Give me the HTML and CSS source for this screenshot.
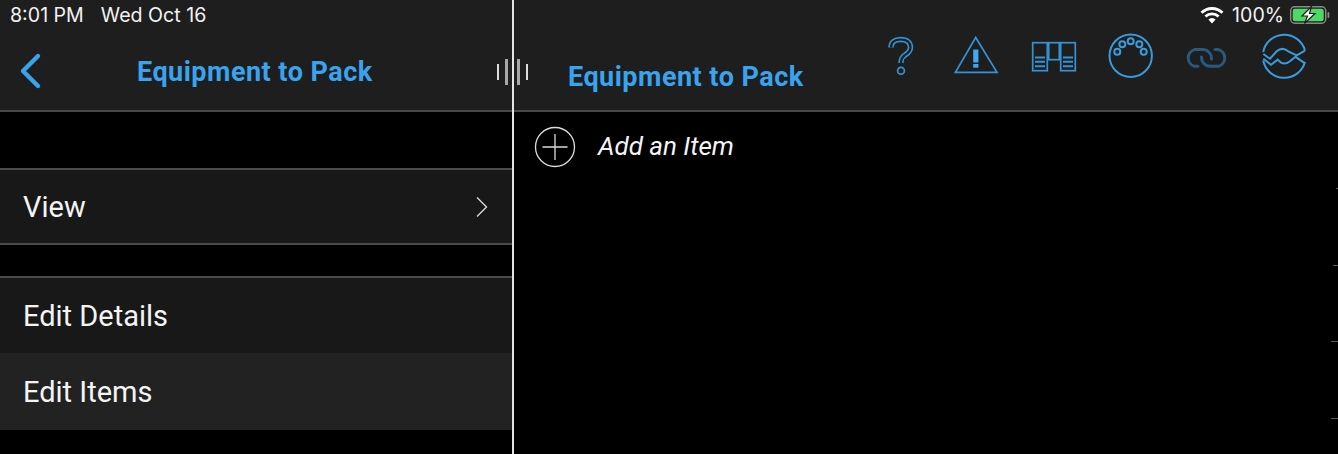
FILE: index.html
```html
<!DOCTYPE html>
<html lang="en">
<head>
  <meta charset="UTF-8">
  <title>Equipment to Pack</title>
  <link rel="stylesheet" href="styles.css">
</head>
<body>
  <div class="split">
    <section class="pane-left">
      <header class="bar">
        <div class="status">
          <span class="clock">8:01 PM</span>
          <span class="date">Wed Oct 16</span>
        </div>
        <div class="nav-left">
          <svg class="back" width="24" height="38" viewBox="0 0 24 38"><path d="M20 4 L5 19 L20 34"/></svg>
          <h1 class="title title-left">Equipment to Pack</h1>
        </div>
      </header>
      <div class="spacer-top"></div>
      <div class="row row-first">
        <span>View</span>
        <svg class="chevron" width="14" height="22" viewBox="0 0 14 22"><path d="M2 1.5 L11.5 11 L2 20.5"/></svg>
      </div>
      <div class="spacer-mid"></div>
      <div class="row row-first row-plain"><span>Edit Details</span></div>
      <div class="row row-active"><span>Edit Items</span></div>
    </section>

    <section class="pane-right">
      <header class="bar">
        <div class="status status-right">
          <svg class="wifi" width="24" height="18" viewBox="0 0 24 18">
            <path d="M1.5 6.8 A15 15 0 0 1 22.5 6.8" fill="none" stroke="#fff" stroke-width="2.8"/>
            <path d="M5.4 10.6 A9.6 9.6 0 0 1 18.6 10.6" fill="none" stroke="#fff" stroke-width="2.8"/>
            <path d="M12 17.5 L8.4 13.6 A5 5 0 0 1 15.6 13.6 Z" fill="#fff"/>
          </svg>
          <span class="pct">100%</span>
          <svg class="battery" width="41" height="18" viewBox="0 0 41 18">
            <rect x="0.7" y="0.7" width="35" height="16.6" rx="4" fill="none" stroke="#8a8a8a" stroke-width="1.4"/>
            <rect x="2.7" y="2.7" width="31" height="12.6" rx="2.2" fill="#4cd964"/>
            <path d="M21.5 0.5 L12 10 H17.5 L14.5 17.5 L25 7.5 H19.5 Z" fill="#fff" stroke="#1e1e1e" stroke-width="1.2"/>
            <rect x="37.5" y="6" width="1.8" height="6" rx="0.9" fill="#8a8a8a"/>
          </svg>
        </div>
        <div class="nav-right">
          <h1 class="title title-right">Equipment to Pack</h1>
          <div class="tools">
            <svg class="tool" viewBox="0 0 48 48">
              <path class="q-out" d="M14 15.5 C14 10 18 7.5 23.5 7.5 C30 7.5 33.5 10.5 33.5 15.5 C33.5 20 30 21.5 27.5 23.5 C25 25.2 24 26.5 24 31"/>
              <path class="q-in" d="M14 15.5 C14 10 18 7.5 23.5 7.5 C30 7.5 33.5 10.5 33.5 15.5 C33.5 20 30 21.5 27.5 23.5 C25 25.2 24 26.5 24 31"/>
              <circle cx="24" cy="38.7" r="3.4"/>
            </svg>
            <svg class="tool" viewBox="0 0 48 48">
              <path d="M21.7 5.5 L1.4 40.3 H43 Z"/>
              <rect class="fill" x="19.2" y="17.5" width="5.2" height="13"/>
              <rect class="fill" x="19.2" y="32" width="5.2" height="3.7"/>
            </svg>
            <svg class="tool" viewBox="0 0 48 48">
              <rect x="1.7" y="10.7" width="14.6" height="28"/>
              <rect x="17.7" y="10.7" width="10.6" height="17"/>
              <rect x="29.7" y="10.7" width="14.6" height="28"/>
              <path class="thick" d="M4 25.5 H14 M4 29.8 H14 M4 34.2 H14 M32 25.5 H42 M32 29.8 H42 M32 34.2 H42"/>
            </svg>
            <svg class="tool tool-round" viewBox="0 0 48 48">
              <circle cx="22.7" cy="23.7" r="21.2"/>
              <circle cx="9.3" cy="19.7" r="3"/>
              <circle cx="14.3" cy="12.3" r="3"/>
              <circle cx="22.7" cy="9.3" r="3"/>
              <circle cx="31.3" cy="12.3" r="3"/>
              <circle cx="35.7" cy="19.7" r="3"/>
            </svg>
            <svg class="tool tool-dim" viewBox="0 0 48 48">
              <path d="M13 34.3 H9.5 A8.7 8.7 0 0 1 9.5 17.6 H18.5 A8.7 8.7 0 0 1 26.5 27"/>
              <path d="M30 17.6 H33.5 A8.7 8.7 0 0 1 33.5 34.3 H24.5 A8.7 8.7 0 0 1 16.5 25"/>
            </svg>
            <svg class="tool tool-round" viewBox="0 0 48 48">
              <path d="M1.2 20 A21.5 21.5 0 0 1 43 18.5"/>
              <path d="M1.2 28.5 A21.5 21.5 0 0 0 43 30"/>
              <path d="M1.3 22 L8 26.7 L14.7 19.3 Q20.3 14.5 26.3 19.3 L34.7 23.3 L43 18.7"/>
              <path d="M1.3 26.7 L9 32.7 L15.7 27.7 Q21.3 34.5 28 29.3 L33.5 24.8 L43 31.3"/>
            </svg>
          </div>
        </div>
      </header>
      <div class="add-row">
        <svg class="add-icon" width="42" height="42" viewBox="0 0 42 42">
          <circle cx="21" cy="21" r="19.5"/>
          <path d="M8.5 21 H33.5 M21 8 V34"/>
        </svg>
        <span class="add-label">Add an Item</span>
      </div>
    </section>

    <div class="grip">
      <i></i><i class="tall"></i><i class="tall after-divider"></i><i></i>
    </div>
    <div class="ticks">
      <i class="t1"></i><i class="t2"></i><i class="t3"></i><i class="t3"></i>
    </div>
  </div>
</body>
</html>
```

FILE: styles.css
```css
/* Reset default styles */
* {
  margin: 0;
  padding: 0;
  box-sizing: border-box;
}

body {
  background-color: #000;
  font-family: 'Roboto', sans-serif;
  color: #fff;
  overflow: hidden;
}

.split {
  display: flex;
  position: relative;
  width: 1338px;
  height: 454px;
}

.pane-left {
  width: 514px;
  flex-shrink: 0;
  border-right: 2px solid #e4e4e4;
}

.pane-right {
  flex: 1;
}

/* Header bars */
.bar {
  height: 112px;
  background-color: #1e1e1e;
  border-bottom: 2px solid #484848;
}

.status {
  display: flex;
  align-items: center;
  height: 30px;
  padding-left: 10px;
  font-family: 'Inter', sans-serif;
  font-size: 19.6px;
  color: #f2f2f2;
}

.date {
  margin-left: 17px;
}

.status-right {
  justify-content: flex-end;
  padding-right: 7px;
}

.wifi {
  margin-right: 8px;
}

.pct {
  margin-right: 6px;
}

.title {
  font-family: 'Roboto', sans-serif;
  font-size: 27px;
  font-weight: 700;
  color: #3aa3ee;
  letter-spacing: 0.48px;
  white-space: nowrap;
}

.nav-left {
  display: flex;
  align-items: center;
  height: 80px;
  padding-left: 18px;
  padding-top: 4px;
}

.back {
  fill: none;
  stroke: #3aa3ee;
  stroke-width: 4.4;
  stroke-linecap: round;
  stroke-linejoin: round;
  margin-top: -2px;
}

.title-left {
  margin-left: 95px;
}

.nav-right {
  display: flex;
  align-items: flex-start;
  height: 80px;
  padding-left: 54px;
}

.title-right {
  margin-top: 31px;
}

.tools {
  display: flex;
  gap: 29px;
  margin-left: auto;
  margin-right: 28px;
  margin-top: 2px;
}

.tool {
  width: 48px;
  height: 48px;
  overflow: visible;
  fill: none;
  stroke: #3492d6;
  stroke-width: 1.7;
}

.tool-round {
  stroke: #389cdf;
  stroke-width: 2;
}

.tool .q-out {
  stroke-width: 5.4;
}

.tool .q-in {
  stroke: #1e1e1e;
  stroke-width: 2.2;
}

.tool .fill {
  fill: #3fa9f5;
  stroke: none;
}

.tool .thick {
  stroke-width: 2;
}

.tool-dim {
  stroke: #28597f;
  stroke-width: 3;
  stroke-linecap: round;
}

/* Left list */
.spacer-top {
  height: 56px;
}

.spacer-mid {
  height: 31px;
}

.row {
  display: flex;
  align-items: center;
  justify-content: space-between;
  height: 77px;
  padding: 0 23px 0 23px;
  font-size: 29px;
  background-color: #181818;
  border-bottom: 2px solid #4a4a4a;
  color: #f4f4f4;
}

.row-first {
  border-top: 2px solid #4a4a4a;
}

.row-plain {
  border-bottom: none;
}

.row-active {
  background-color: #222;
  border-bottom: none;
}

.chevron {
  fill: none;
  stroke: #d8d8d8;
  stroke-width: 1.4;
}

/* Right content */
.add-row {
  display: flex;
  align-items: center;
  height: 70px;
  padding-left: 20px;
}

.add-icon {
  fill: none;
  stroke: #dcdcdc;
  stroke-width: 1.3;
}

.add-label {
  margin-left: 22px;
  margin-top: -2px;
  font-size: 26px;
  font-style: italic;
  color: #f4f4f4;
}

/* Slider handle sitting over the divider */
.grip {
  position: absolute;
  left: 497px;
  top: 59px;
  display: flex;
  align-items: center;
  gap: 6px;
  height: 26px;
}

.grip i {
  display: block;
  width: 2px;
  height: 16px;
  background-color: #dcdcdc;
}

.grip i.tall {
  width: 2.5px;
  height: 26px;
  background-color: #a8a8a8;
}

.grip i.after-divider {
  margin-left: 3.5px;
}

/* Faint edge marks on the far right */
.ticks {
  position: absolute;
  right: 0;
  top: 188px;
  display: flex;
  flex-direction: column;
  align-items: flex-end;
  gap: 75.5px;
}

.ticks i {
  display: block;
  height: 1px;
  background-color: #5a5a5a;
}

.ticks .t1 {
  width: 2px;
}

.ticks .t2 {
  width: 5px;
}

.ticks .t3 {
  width: 7px;
}
```
